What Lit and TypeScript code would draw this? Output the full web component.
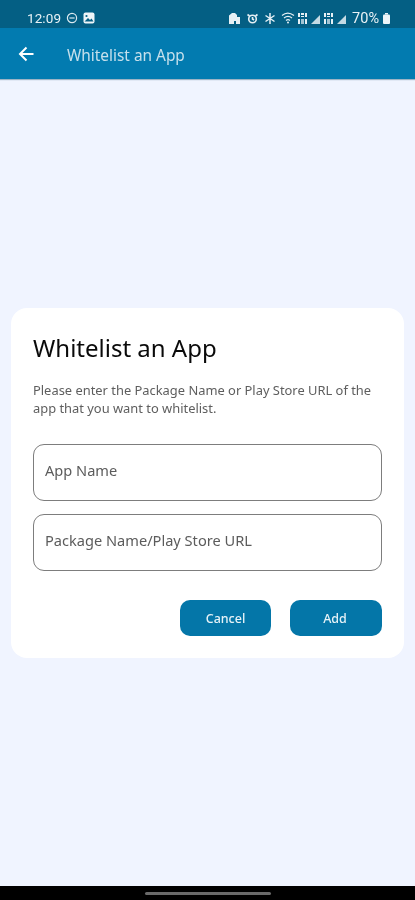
import { LitElement, html, css } from "lit";
import { customElement } from "lit/decorators.js";

@customElement("app-root")
export class AppRoot extends LitElement {
  static styles = css`
    :host { display: flex; flex-direction: column; width: 415px; height: 900px; overflow: hidden; font-family: "Noto Sans", "Open Sans", sans-serif; background: #f0f4ff; filter: blur(0.35px); }
    svg { display: block; flex: none; }
    .status { height: 28px; box-sizing: border-box; flex: none; background: #045f84; color: #e9f2f6; display: flex; align-items: center; padding: 8px 25px 0 27px; gap: 5px; font-family: Roboto, sans-serif; font-size: 13.5px; }
    .status .time { letter-spacing: 0.1px; }
    .spacer { flex: 1; }
    .sys { display: flex; align-items: center; gap: 2px; }
    .batt { margin-left: -1px; font-size: 14.5px; }
    .appbar { height: 51px; flex: none; background: #027bb0; color: #fff; display: flex; align-items: center; padding: 0 0 0 18px; box-shadow: 0 1px 1px rgba(0,60,90,.35); }
    .appbar .name { margin-left: 33px; padding-top: 3px; font-size: 15.4px; color: #c6e0ec; }
    .main { flex: 1; display: flex; flex-direction: column; padding: 229px 11px 0; }
    .card { background: #fff; border-radius: 16px; height: 350px; box-sizing: border-box; padding: 22px 22px 0; display: flex; flex-direction: column; }
    h1 { margin: 0; font-size: 24px; line-height: 36px; font-weight: 400; color: #0a0a0a; }
    p { margin: 15px 0 0; font-size: 12.9px; line-height: 18px; color: #5e5e5e; }
    .field { height: 57px; box-sizing: border-box; border: 1px solid #7d7d7d; border-radius: 11px; display: flex; align-items: center; padding: 0 11px 5px; font-size: 14.6px; color: #5c5c5c; }
    .fields { display: flex; flex-direction: column; gap: 13px; margin-top: 27px; }
    .actions { display: flex; justify-content: flex-end; gap: 19px; margin-top: 29px; }
    .btn { width: 91px; height: 36px; border-radius: 10px; background: #0476a8; color: #e6f2f7; font-size: 12.5px; font-weight: 500; display: flex; align-items: center; justify-content: center; }
    .btn.add { width: 92px; padding-right: 2px; box-sizing: border-box; }
    .nav { height: 14px; flex: none; background: #000; display: flex; justify-content: center; padding-top: 6px; box-sizing: border-box; }
    .pill { width: 126px; height: 3px; border-radius: 2px; background: #6a6a6a; }
  `;

  render() {
    return html`
      <div class="status">
        <span class="time">12:09</span>
        <svg width="12" height="12" viewBox="0 0 12 12" fill="none" stroke="#dbe9f0" stroke-width="1.2"><circle cx="6" cy="6" r="4.6"/><path d="M3.4 6h5.2"/></svg>
        <svg width="12" height="12" viewBox="0 0 12 12"><rect x=".5" y=".5" width="11" height="11" rx="2" fill="#eef5f8"/><circle cx="3.5" cy="4" r="1.1" fill="#045f84"/><path d="M1.5 9.5 5 6l2 2 1.5-1.5 2 3z" fill="#045f84"/></svg>
        <span class="spacer"></span>
        <div class="sys">
          <svg width="13" height="13" viewBox="0 0 13 13" fill="#e6f0f5"><path d="M1 3.5 4 1h3l2 2v2h3v7H8V9H6v3H1z"/></svg>
          <svg width="13" height="13" viewBox="0 0 13 13" fill="none" stroke="#e6f0f5" stroke-width="1.6" style="margin-left:3px"><circle cx="6.5" cy="7" r="3.8"/><path d="M1.5 2.5l2 1.5M11.5 2.5l-2 1.5M6.5 5v2l1.5 1"/></svg>
          <svg width="12" height="13" viewBox="0 0 12 13" fill="none" stroke="#e6f0f5" stroke-width="1.5" style="margin-left:3px"><path d="M6 1v11M1.5 3.5l9 6M10.5 3.5l-9 6"/></svg>
          <svg width="15" height="12" viewBox="0 0 15 12" fill="none" stroke="#e6f0f5" stroke-width="1.2" style="margin-left:3px"><path d="M1 3.5C4.5.5 9 .5 13 3.5M3 6c2.500-2 5.500-2 8 0M5 8.500c1.300-1 2.700-1 4 0"/><circle cx="7" cy="10.500" r="1" fill="#e6f0f5" stroke="none"/></svg>
          ${[0, 1].map(() => html`
            <svg width="24" height="13" viewBox="0 0 24 13" fill="#e6f0f5">
              <rect x="0" y="1" width="2" height="4"/><rect x="3" y="1" width="3" height="2"/><rect x="7" y="1" width="2" height="4"/><rect x="3" y="4" width="3" height="1"/>
              <rect x="0" y="7" width="2" height="5"/><rect x="3" y="7" width="3" height="5" opacity=".7"/><rect x="7" y="7" width="2" height="5"/>
              <path d="M22 3v9h-9z" opacity=".85"/>
            </svg>`)}
        </div>
        <span class="batt">70%</span>
        <svg width="7" height="11" viewBox="0 0 7 11" fill="#eef5f8" style="margin-left:-1px"><rect x="2" y="0" width="3" height="1.500"/><rect x="0" y="1.500" width="7" height="9.500" rx="1"/></svg>
      </div>
      <div class="appbar">
        <svg width="16" height="16" viewBox="0 0 16 16" fill="none" stroke="#fff" stroke-width="2"><path d="M15.500 8H2M8.500 1.500 2 8l6.500 6.500"/></svg>
        <span class="name">Whitelist an App</span>
      </div>
      <div class="main">
        <div class="card">
          <h1>Whitelist an App</h1>
          <p>Please enter the Package Name or Play Store URL of the app that you want to whitelist.</p>
          <div class="fields">
            <div class="field">App Name</div>
            <div class="field">Package Name/Play Store URL</div>
          </div>
          <div class="actions">
            <div class="btn">Cancel</div>
            <div class="btn add">Add</div>
          </div>
        </div>
      </div>
      <div class="nav"><div class="pill"></div></div>
    `;
  }
}
